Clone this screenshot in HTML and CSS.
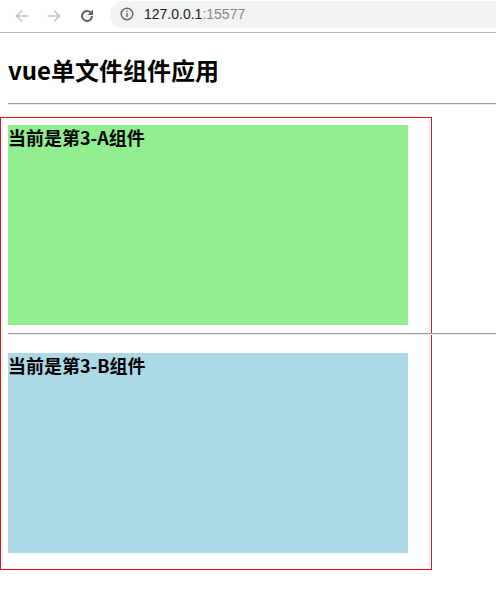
FILE: index.html
```html
<!DOCTYPE html>
<html lang="zh">
<head>
<meta charset="utf-8">
<title>vue单文件组件应用</title>
<link rel="stylesheet" href="styles.css">
</head>
<body>
<div class="toolbar">
  <svg class="nav-icon back" width="16" height="16" viewBox="0 0 16 16"><path d="M14.5 8H2.5M8 2.5L2.5 8 8 13.5" fill="none" stroke="#c4c4c4" stroke-width="1.6"/></svg>
  <svg class="nav-icon fwd" width="16" height="16" viewBox="0 0 16 16"><path d="M1.5 8h12M8 2.5L13.5 8 8 13.5" fill="none" stroke="#c4c4c4" stroke-width="1.6"/></svg>
  <svg class="nav-icon reload" width="16" height="16" viewBox="0 0 16 16"><path d="M13 8a5 5 0 1 1-1.5-3.6" fill="none" stroke="#5f6368" stroke-width="2"/><path d="M14 1.5v5.5H8.5z" fill="#5f6368"/></svg>
  <div class="omnibox">
    <svg class="info" width="14" height="14" viewBox="0 0 14 14"><circle cx="7" cy="7" r="5.8" fill="none" stroke="#5f6368" stroke-width="1.4"/><rect x="6.3" y="6" width="1.4" height="4" fill="#5f6368"/><rect x="6.3" y="3.6" width="1.4" height="1.4" fill="#5f6368"/></svg>
    <span class="host">127.0.0.1</span><span class="port">:15577</span>
  </div>
</div>
<div class="page">
  <h2 class="title">vue单文件组件应用</h2>
  <hr class="rule">
  <div class="app">
    <div class="comp comp-a"><h3 class="comp-title">当前是第3-A组件</h3></div>
    <hr class="rule">
    <div class="comp comp-b"><h3 class="comp-title">当前是第3-B组件</h3></div>
  </div>
</div>
</body>
</html>
```
FILE: styles.css
```css
html, body {
  margin: 0;
  padding: 0;
  background: #fff;
}
body {
  font-family: "Noto Sans CJK SC", "Noto Sans", sans-serif;
  color: #000;
}
.toolbar {
  height: 32px;
  border-bottom: 1px solid #b8b8b8;
  display: flex;
  align-items: center;
  background: #fff;
  box-sizing: content-box;
  overflow: hidden;
}
.nav-icon { flex: none; }
.back { margin-left: 14px; }
.fwd { margin-left: 16px; }
.reload { margin-left: 17px; }
.omnibox {
  margin-left: 15px;
  height: 27px;
  margin-top: -4px;
  flex: 1;
  background: #f1f3f4;
  border-radius: 14px 0 0 14px;
  display: flex;
  align-items: center;
  font-family: "Liberation Sans", Arial, sans-serif;
  font-size: 14px;
  padding-left: 10px;
}
.info { margin-right: 10px; flex: none; }
.host { color: #202124; }
.port { color: #80868b; }
.page {
  padding: 0 8px;
}
.title {
  margin: 21px 0 0;
  font-size: 24px;
  line-height: 32px;
  font-weight: bold;
}
.rule {
  width: 488px;
  margin: 17px 0 0;
  height: 0;
  border: 0;
  border-top: 1px solid #9a9a9a;
  border-bottom: 1px solid #ececec;
}
.app {
  margin: 12px 0 0 -8px;
  width: 423px;
  border: 1px solid #e0141e;
  padding: 7px 0 16px 7px;
  box-sizing: content-box;
  height: 428px;
}
.comp {
  width: 400px;
  height: 200px;
}
.comp-a { background: #90ee90; }
.comp-b { background: #add8e6; }
.app .rule {
  margin: 8px 0 18px 0;
}
.comp-title {
  margin: 0;
  font-size: 18px;
  line-height: 24px;
  font-weight: bold;
}
```
